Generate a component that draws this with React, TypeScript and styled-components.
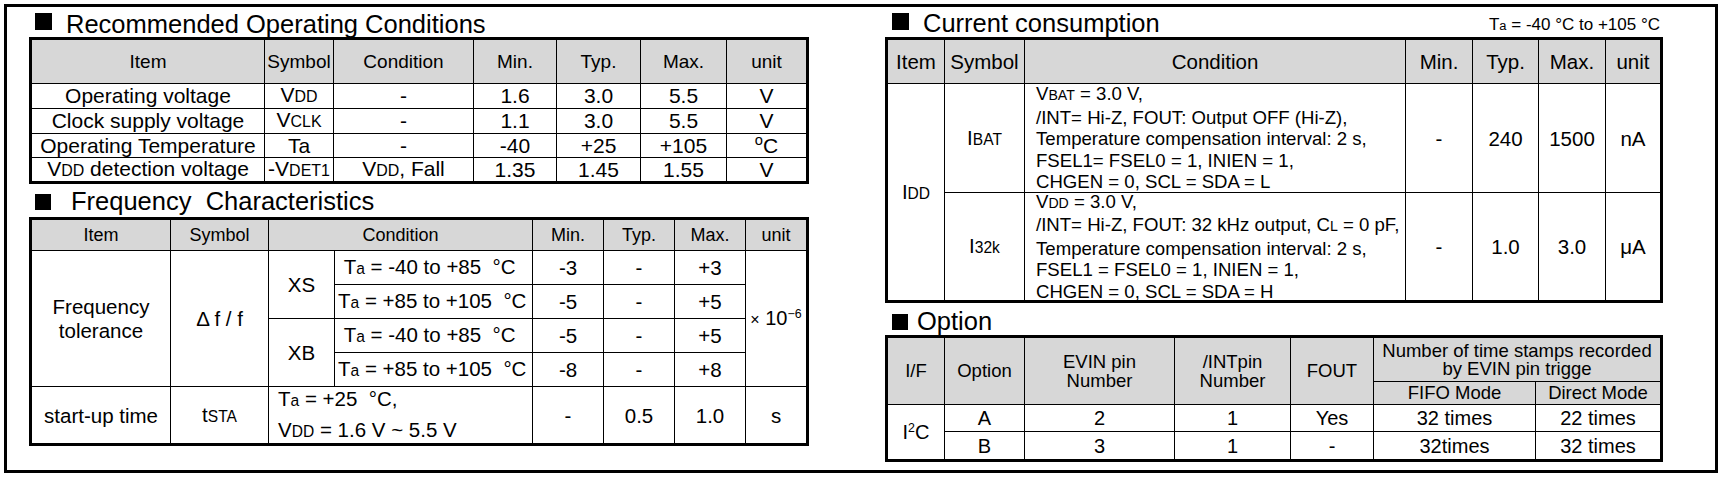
import React from 'react';
import styled, { createGlobalStyle } from 'styled-components';

const GlobalStyle = createGlobalStyle`
  html, body { margin: 0; padding: 0; background: #fff; }
  body { font-family: "Liberation Sans", Arial, Helvetica, sans-serif; color: #000; }
`;

const Frame = styled.div`
  box-sizing: border-box;
  margin: 4px;
  width: 1714px;
  height: 469px;
  border: 3px solid #000;
  display: flex;
  align-items: flex-start;
  gap: 76px;
  padding-left: 22px;
`;

const Column = styled.div<{ $w: number }>`
  display: flex;
  flex-direction: column;
  width: ${(p) => p.$w}px;
`;

const SectionTitle = styled.div<{ $h: number; $pb: number }>`
  box-sizing: border-box;
  height: ${(p) => p.$h}px;
  padding-bottom: ${(p) => p.$pb}px;
  display: flex;
  align-items: flex-end;
`;

const Bullet = styled.span<{ $size: number; $ml: number; $mb: number; $gap: number }>`
  flex-shrink: 0;
  width: ${(p) => p.$size}px;
  height: ${(p) => p.$size}px;
  background: #000;
  margin-left: ${(p) => p.$ml}px;
  margin-bottom: ${(p) => p.$mb}px;
  margin-right: ${(p) => p.$gap}px;
`;

const TitleText = styled.span`
  font-size: 25.5px;
  line-height: 1;
  white-space: pre;
`;

const Note = styled.span`
  margin-left: auto;
  margin-bottom: 3px;
  padding-right: 3px;
  font-size: 17px;
  line-height: 1;
  white-space: pre;
`;

const Table = styled.div<{ $cols: string; $rows: string }>`
  display: grid;
  grid-template-columns: ${(p) => p.$cols};
  grid-template-rows: ${(p) => p.$rows};
  gap: 1px;
  background: #000;
  border: 3px solid #000;
  width: max-content;
`;

const CellBox = styled.div<{
  $head?: boolean;
  $col?: string;
  $row?: string;
  $left?: boolean;
  $size: number;
  $lh: number;
  $pl: number;
}>`
  background: ${(p) => (p.$head ? '#d7d7d7' : '#fff')};
  grid-column: ${(p) => p.$col ?? 'auto'};
  grid-row: ${(p) => p.$row ?? 'auto'};
  display: flex;
  align-items: center;
  justify-content: ${(p) => (p.$left ? 'flex-start' : 'center')};
  text-align: ${(p) => (p.$left ? 'left' : 'center')};
  padding-left: ${(p) => p.$pl}px;
  font-size: ${(p) => p.$size}px;
  line-height: ${(p) => p.$lh}px;
  white-space: pre;
  min-width: 0;
  min-height: 0;
`;

const Inner = styled.span`
  display: block;
`;

const Sm = styled.span`
  font-size: 0.76em;
`;

const Sup = styled.span<{ $s?: number }>`
  font-size: ${(p) => p.$s ?? 0.6}em;
  vertical-align: 0.55em;
  line-height: 0;
`;

const Times = styled.span`
  font-size: 0.8em;
`;

type CellProps = {
  head?: boolean;
  col?: string;
  row?: string;
  left?: boolean;
  size: number;
  lh?: number;
  pl?: number;
  children?: React.ReactNode;
};

const Cell = ({ head, col, row, left, size, lh, pl, children }: CellProps) => (
  <CellBox
    $head={head}
    $col={col}
    $row={row}
    $left={left}
    $size={size}
    $lh={lh ?? Math.round(size * 1.1)}
    $pl={pl ?? 0}
  >
    <Inner>{children}</Inner>
  </CellBox>
);

const deg = (
  <>
    <Sup $s={0.7}>o</Sup>C
  </>
);

function Recommended() {
  const H = 19;
  const B = 21;
  const rows: React.ReactNode[][] = [
    ['Operating voltage', <>V<Sm>DD</Sm></>, '-', '1.6', '3.0', '5.5', 'V'],
    ['Clock supply voltage', <>V<Sm>CLK</Sm></>, '-', '1.1', '3.0', '5.5', 'V'],
    ['Operating Temperature', 'Ta', '-', '-40', '+25', '+105', deg],
    [
      <>V<Sm>DD</Sm> detection voltage</>,
      <>-V<Sm>DET1</Sm></>,
      <>V<Sm>DD</Sm>, Fall</>,
      '1.35',
      '1.45',
      '1.55',
      'V',
    ],
  ];
  return (
    <Table $cols="232px 68px 139px 82px 83px 85px 79px" $rows="43px 24px 24px 23px 23px">
      {['Item', 'Symbol', 'Condition', 'Min.', 'Typ.', 'Max.', 'unit'].map((h) => (
        <Cell key={h} head size={H}>
          {h}
        </Cell>
      ))}
      {rows.map((r, i) =>
        r.map((c, j) => (
          <Cell key={`${i}-${j}`} size={B} lh={22}>
            {c}
          </Cell>
        ))
      )}
    </Table>
  );
}

function Frequency() {
  const H = 18;
  const B = 20.5;
  const ta = (range: string, lead: boolean) => (
    <>
      {lead ? '\u00a0' : ''}T<Sm>a</Sm> = {range}  °C
    </>
  );
  return (
    <Table
      $cols="138px 97px 65px 197px 70px 70px 70px 60px"
      $rows="30px 33px 33px 33px 33px 56px"
    >
      <Cell head size={H}>Item</Cell>
      <Cell head size={H}>Symbol</Cell>
      <Cell head size={H} col="3 / span 2">Condition</Cell>
      <Cell head size={H}>Min.</Cell>
      <Cell head size={H}>Typ.</Cell>
      <Cell head size={H}>Max.</Cell>
      <Cell head size={H}>unit</Cell>

      <Cell size={B} lh={24} col="1" row="2 / span 4">
        Frequency{'\n'}tolerance
      </Cell>
      <Cell size={B} col="2" row="2 / span 4">Δ f / f</Cell>
      <Cell size={B} col="3" row="2 / span 2">XS</Cell>
      <Cell size={B} col="4" row="2" left pl={3}>{ta('-40 to +85', true)}</Cell>
      <Cell size={B} col="5" row="2">-3</Cell>
      <Cell size={B} col="6" row="2">-</Cell>
      <Cell size={B} col="7" row="2">+3</Cell>
      <Cell size={20} col="8" row="2 / span 4">
        <Times>×</Times> 10<Sup $s={0.62}>−6</Sup>
      </Cell>

      <Cell size={B} col="4" row="3" left pl={3}>{ta('+85 to +105', false)}</Cell>
      <Cell size={B} col="5" row="3">-5</Cell>
      <Cell size={B} col="6" row="3">-</Cell>
      <Cell size={B} col="7" row="3">+5</Cell>

      <Cell size={B} col="3" row="4 / span 2">XB</Cell>
      <Cell size={B} col="4" row="4" left pl={3}>{ta('-40 to +85', true)}</Cell>
      <Cell size={B} col="5" row="4">-5</Cell>
      <Cell size={B} col="6" row="4">-</Cell>
      <Cell size={B} col="7" row="4">+5</Cell>

      <Cell size={B} col="4" row="5" left pl={3}>{ta('+85 to +105', false)}</Cell>
      <Cell size={B} col="5" row="5">-8</Cell>
      <Cell size={B} col="6" row="5">-</Cell>
      <Cell size={B} col="7" row="5">+8</Cell>

      <Cell size={B} col="1" row="6">start-up time</Cell>
      <Cell size={B} col="2" row="6">
        t<Sm>STA</Sm>
      </Cell>
      <Cell size={B} lh={29} col="3 / span 2" row="6" left pl={9}>
        T<Sm>a</Sm> = +25  °C,{'\n'}V<Sm>DD</Sm> = 1.6 V ~ 5.5 V
      </Cell>
      <Cell size={B} col="5" row="6">-</Cell>
      <Cell size={B} col="6" row="6">0.5</Cell>
      <Cell size={B} col="7" row="6">1.0</Cell>
      <Cell size={B} col="8" row="6">s</Cell>
    </Table>
  );
}

function Current() {
  const H = 20.5;
  const B = 20.5;
  const C = 18.6;
  return (
    <Table $cols="56px 79px 380px 66px 65px 66px 54px" $rows="43px 108px 107px">
      {['Item', 'Symbol', 'Condition', 'Min.', 'Typ.', 'Max.', 'unit'].map((h) => (
        <Cell key={h} head size={H}>
          {h}
        </Cell>
      ))}
      <Cell size={B} col="1" row="2 / span 2">
        I<Sm>DD</Sm>
      </Cell>
      <Cell size={B} col="2" row="2">
        I<Sm>BAT</Sm>
      </Cell>
      <Cell size={C} lh={21.6} col="3" row="2" left pl={11}>
        V<Sm>BAT</Sm> = 3.0 V,{'\n'}/INT= Hi-Z, FOUT: Output OFF (Hi-Z),{'\n'}Temperature compensation interval: 2 s,
        {'\n'}FSEL1= FSEL0 = 1, INIEN = 1,{'\n'}CHGEN = 0, SCL = SDA = L
      </Cell>
      <Cell size={B} col="4" row="2">-</Cell>
      <Cell size={B} col="5" row="2">240</Cell>
      <Cell size={B} col="6" row="2">1500</Cell>
      <Cell size={B} col="7" row="2">nA</Cell>

      <Cell size={B} col="2" row="3">
        I<Sm>32k</Sm>
      </Cell>
      <Cell size={C} lh={21.6} col="3" row="3" left pl={11}>
        V<Sm>DD</Sm> = 3.0 V,{'\n'}/INT= Hi-Z, FOUT: 32 kHz output, C<Sm>L</Sm> = 0 pF,{'\n'}Temperature compensation
        interval: 2 s,{'\n'}FSEL1 = FSEL0 = 1, INIEN = 1,{'\n'}CHGEN = 0, SCL = SDA = H
      </Cell>
      <Cell size={B} col="4" row="3">-</Cell>
      <Cell size={B} col="5" row="3">1.0</Cell>
      <Cell size={B} col="6" row="3">3.0</Cell>
      <Cell size={B} col="7" row="3">μA</Cell>
    </Table>
  );
}

function Option() {
  const H = 18.5;
  const B = 20;
  return (
    <Table $cols="56px 79px 149px 115px 82px 161px 124px" $rows="43px 22px 26px 27px">
      <Cell head size={H} col="1" row="1 / span 2">I/F</Cell>
      <Cell head size={H} col="2" row="1 / span 2">Option</Cell>
      <Cell head size={H} lh={19} col="3" row="1 / span 2">
        EVIN pin{'\n'}Number
      </Cell>
      <Cell head size={H} lh={19} col="4" row="1 / span 2">
        /INTpin{'\n'}Number
      </Cell>
      <Cell head size={H} col="5" row="1 / span 2">FOUT</Cell>
      <Cell head size={H} lh={18} col="6 / span 2" row="1">
        Number of time stamps recorded{'\n'}by EVIN pin trigge
      </Cell>
      <Cell head size={H} lh={20} col="6" row="2">FIFO Mode</Cell>
      <Cell head size={H} lh={20} col="7" row="2">Direct Mode</Cell>

      <Cell size={B} col="1" row="3 / span 2">
        I<Sup $s={0.62}>2</Sup>C
      </Cell>
      <Cell size={B} lh={22} col="2" row="3">A</Cell>
      <Cell size={B} lh={22} col="3" row="3">2</Cell>
      <Cell size={B} lh={22} col="4" row="3">1</Cell>
      <Cell size={B} lh={22} col="5" row="3">Yes</Cell>
      <Cell size={B} lh={22} col="6" row="3">32 times</Cell>
      <Cell size={B} lh={22} col="7" row="3">22 times</Cell>

      <Cell size={B} lh={22} col="2" row="4">B</Cell>
      <Cell size={B} lh={22} col="3" row="4">3</Cell>
      <Cell size={B} lh={22} col="4" row="4">1</Cell>
      <Cell size={B} lh={22} col="5" row="4">-</Cell>
      <Cell size={B} lh={22} col="6" row="4">32times</Cell>
      <Cell size={B} lh={22} col="7" row="4">32 times</Cell>
    </Table>
  );
}

export default function App() {
  return (
    <>
      <GlobalStyle />
      <Frame>
        <Column $w={780}>
          <SectionTitle $h={30} $pb={0}>
            <Bullet $size={17} $ml={6} $mb={7} $gap={14} />
            <TitleText>Recommended Operating Conditions</TitleText>
          </SectionTitle>
          <Recommended />
          <SectionTitle $h={33} $pb={3}>
            <Bullet $size={16} $ml={6} $mb={4} $gap={20} />
            <TitleText>Frequency  Characteristics</TitleText>
          </SectionTitle>
          <Frequency />
        </Column>
        <Column $w={778}>
          <SectionTitle $h={30} $pb={1}>
            <Bullet $size={17} $ml={7} $mb={6} $gap={14} />
            <TitleText>Current consumption</TitleText>
            <Note>
              T<Sm>a</Sm> = -40 °C to +105 °C
            </Note>
          </SectionTitle>
          <Current />
          <SectionTitle $h={32} $pb={1}>
            <Bullet $size={16} $ml={7} $mb={4} $gap={9} />
            <TitleText>Option</TitleText>
          </SectionTitle>
          <Option />
        </Column>
      </Frame>
    </>
  );
}
